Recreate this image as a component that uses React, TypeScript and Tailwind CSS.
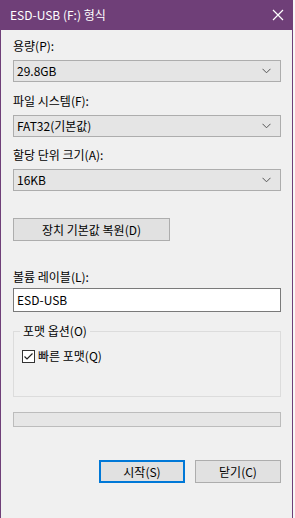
import React from "react";

const font = { fontFamily: '"Malgun Gothic", "Noto Sans CJK KR", "Noto Sans", sans-serif' };

const Chevron = () => (
  <svg width="9" height="6" viewBox="0 0 9 6" className="text-[#555]">
    <path d="M0.5 0.8 L4.5 4.8 L8.5 0.8" fill="none" stroke="currentColor" strokeWidth="1" />
  </svg>
);

const Select = ({ value }: { value: string }) => (
  <div className="h-[22px] w-full border border-[#adadad] bg-[#e5e5e5] flex items-center justify-between pl-[3px] pr-[9px]">
    <span>{value}</span>
    <Chevron />
  </div>
);

const Label = ({ children }: { children: React.ReactNode }) => (
  <div className="leading-[16px] h-[16px]">{children}</div>
);

export default function App() {
  return (
    <div className="w-[295px] h-[518px] flex bg-white text-[12px] text-black" style={font}>
      <div className="w-[293px] h-full flex flex-col border-x border-[#6f3f78] bg-[#f0f0f0]">
        <div className="h-[30px] shrink-0 bg-[#6f3f78] flex items-center justify-between pl-[9px] pr-[8px] text-white">
          <span className="text-[12px]">ESD-USB (F:) 형식</span>
          <svg width="12" height="12" viewBox="0 0 12 12">
            <path d="M1 1 L11 11 M11 1 L1 11" stroke="white" strokeWidth="1.2" />
          </svg>
        </div>
        <div className="flex flex-col pl-[12px] pr-[11px] pt-[8px]">
          <Label>용량(P):</Label>
          <div className="mt-[6px]">
            <Select value="29.8GB" />
          </div>
          <div className="mt-[11px]">
            <Label>파일 시스템(F):</Label>
          </div>
          <div className="mt-[6px]">
            <Select value="FAT32(기본값)" />
          </div>
          <div className="mt-[10px]">
            <Label>할당 단위 크기(A):</Label>
          </div>
          <div className="mt-[6px]">
            <Select value="16KB" />
          </div>
          <div className="mt-[27px] w-[157px] h-[23px] border border-[#adadad] bg-[#e1e1e1] flex items-center justify-center">
            장치 기본값 복원(D)
          </div>
          <div className="mt-[28px]">
            <Label>볼륨 레이블(L):</Label>
          </div>
          <div className="mt-[3px] h-[24px] border border-[#7a7a7a] bg-white flex items-center pl-[3px]">
            ESD-USB
          </div>
          <div className="mt-[19px] relative h-[66px] border border-[#dcdcdc]">
            <span className="absolute -top-[9px] left-[6px] px-[3px] bg-[#f0f0f0] leading-[16px]">
              포맷 옵션(O)
            </span>
            <div className="flex items-center gap-[3px] pl-[8px] pt-[16px]">
              <span className="w-[13px] h-[13px] border border-[#333] bg-white flex items-center justify-center">
                <svg width="11" height="11" viewBox="0 0 11 11">
                  <path d="M1.5 5.5 L4 8 L9.5 2.5" fill="none" stroke="#222" strokeWidth="1.2" />
                </svg>
              </span>
              <span className="leading-[16px]">빠른 포맷(Q)</span>
            </div>
          </div>
          <div className="mt-[15px] h-[15px] border border-[#bcbcbc] bg-[#e6e6e6]" />
          <div className="mt-[33px] flex justify-end gap-[10px]">
            <div className="w-[86px] h-[23px] border-2 border-[#0078d7] bg-[#e1e1e1] flex items-center justify-center">
              시작(S)
            </div>
            <div className="w-[86px] h-[23px] border border-[#adadad] bg-[#e1e1e1] flex items-center justify-center">
              닫기(C)
            </div>
          </div>
        </div>
      </div>
      <div className="flex-1 bg-[#f7f7f7]" />
    </div>
  );
}
